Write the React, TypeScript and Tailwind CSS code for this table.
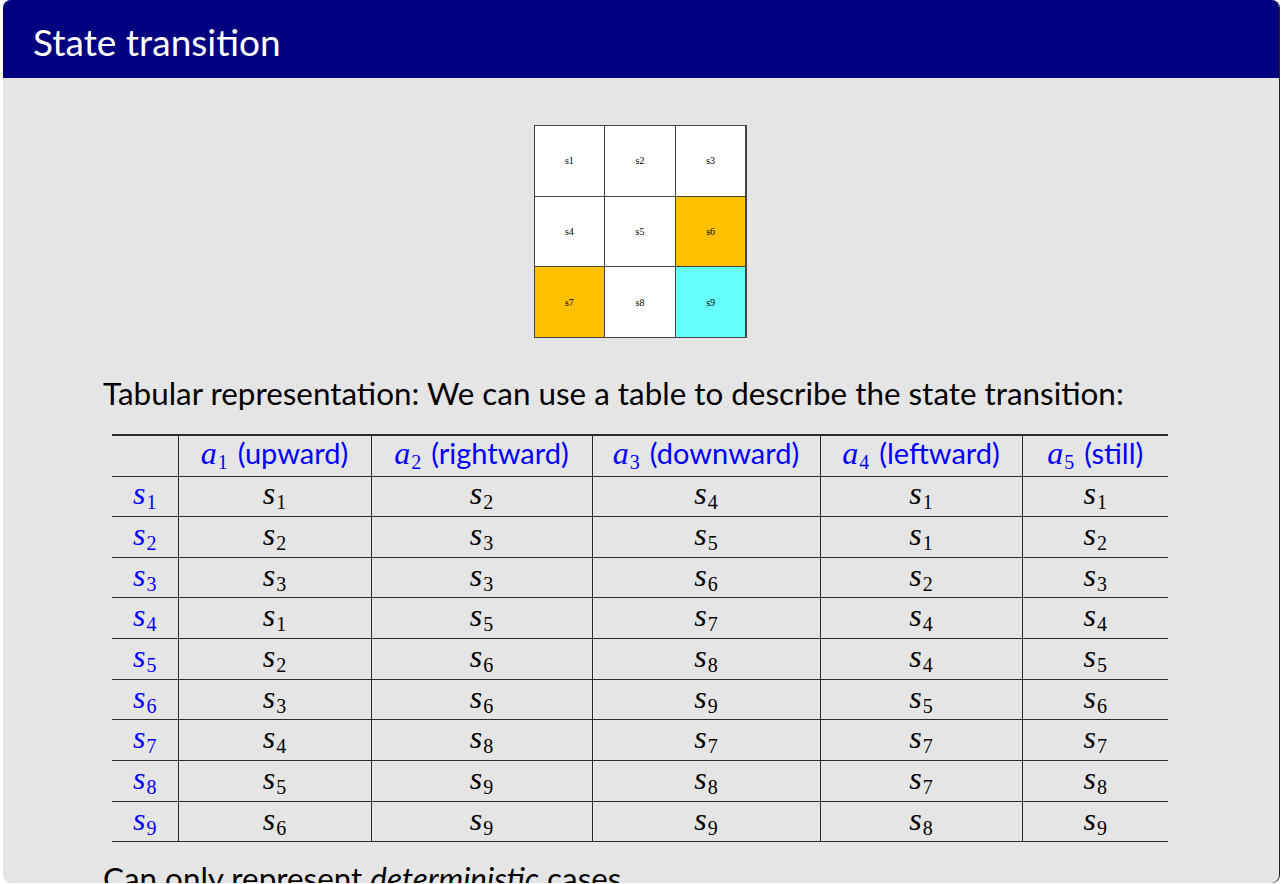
import React from "react";

const sans = { fontFamily: "Lato, 'Open Sans', sans-serif" };

function M({ v, n, blue }: { v: string; n: number | string; blue?: boolean }) {
  return (
    <span
      className={`${blue ? "text-[#0000ff]" : "text-black"} leading-none inline-block relative -top-[3px]`}
      style={{ fontFamily: "'Liberation Serif', serif" }}
    >
      <span className="italic text-[32px] leading-none">{v}</span>
      <span className="text-[20px] leading-none relative top-[5px] ml-[1px]">{n}</span>
    </span>
  );
}

const actions = ["upward", "rightward", "downward", "leftward", "still"];
const data: number[][] = [
  [1, 2, 4, 1, 1],
  [2, 3, 5, 1, 2],
  [3, 3, 6, 2, 3],
  [1, 5, 7, 4, 4],
  [2, 6, 8, 4, 5],
  [3, 6, 9, 5, 6],
  [4, 8, 7, 7, 7],
  [5, 9, 8, 7, 8],
  [6, 9, 9, 8, 9],
];
const colW = [66, 193, 221, 228, 202, 146];

const gridCells: { label: string; bg: string }[] = [
  { label: "s1", bg: "bg-white" },
  { label: "s2", bg: "bg-white" },
  { label: "s3", bg: "bg-white" },
  { label: "s4", bg: "bg-white" },
  { label: "s5", bg: "bg-white" },
  { label: "s6", bg: "bg-[#ffc000]" },
  { label: "s7", bg: "bg-[#ffc000]" },
  { label: "s8", bg: "bg-white" },
  { label: "s9", bg: "bg-[#66ffff]" },
];

export default function App() {
  return (
    <div className="w-[1284px] h-[884px] bg-white overflow-hidden">
      <div className="ml-[3px] w-[1276px] h-[883px] rounded-[8px] bg-[#e5e5e5] overflow-hidden flex flex-col shadow-[1px_0_0_#222]">
        <div className="h-[78px] bg-[#000080] flex items-center pl-[30px] shrink-0">
          <span className="text-white text-[37px] leading-none mt-[4px]" style={sans}>
            State transition
          </span>
        </div>
        <div className="flex flex-col items-center pt-[47px] shrink-0">
          <div className="grid grid-cols-3 w-[213px] h-[213px] border border-[#444] bg-[#444] gap-[1px] -translate-x-[1px]">
            {gridCells.map((c) => (
              <div
                key={c.label}
                className={`${c.bg} flex items-center justify-center text-[10px] text-black`}
                style={{ fontFamily: "'Liberation Serif', serif" }}
              >
                {c.label}
              </div>
            ))}
          </div>
        </div>
        <div className="pl-[100px] mt-[35px] text-[31.4px] leading-[40px] text-black shrink-0" style={sans}>
          Tabular representation: We can use a table to describe the state transition:
        </div>
        <div className="pl-[109px] mt-[21px] shrink-0">
          <table className="border-collapse table-fixed" style={{ width: 1056 }}>
            <colgroup>
              {colW.map((w, i) => (
                <col key={i} style={{ width: w }} />
              ))}
            </colgroup>
            <thead>
              <tr className="border-t-[2px] border-b border-[#2a2a2a]" style={{ height: 41 }}>
                <th className="p-0"></th>
                {actions.map((a, i) => (
                  <th key={a} className="p-0 font-normal border-l border-[#2a2a2a] whitespace-nowrap text-center leading-none">
                    <M v="a" n={i + 1} blue />
                    <span className="text-[#0000ff] text-[29px] leading-none ml-[10px] relative -top-[3px]" style={sans}>
                      ({a})
                    </span>
                  </th>
                ))}
              </tr>
            </thead>
            <tbody>
              {data.map((row, r) => (
                <tr key={r} className="border-b border-[#2a2a2a]" style={{ height: 40.67 }}>
                  <td className="p-0 text-center leading-none">
                    <M v="s" n={r + 1} blue />
                  </td>
                  {row.map((v, c) => (
                    <td key={c} className="p-0 text-center border-l border-[#2a2a2a] leading-none">
                      <M v="s" n={v} />
                    </td>
                  ))}
                </tr>
              ))}
            </tbody>
          </table>
        </div>
        <div className="pl-[100px] mt-[16px] text-[31.4px] leading-[40px] text-black shrink-0" style={sans}>
          Can only represent <span className="italic">deterministic</span> cases.
        </div>
      </div>
    </div>
  );
}
